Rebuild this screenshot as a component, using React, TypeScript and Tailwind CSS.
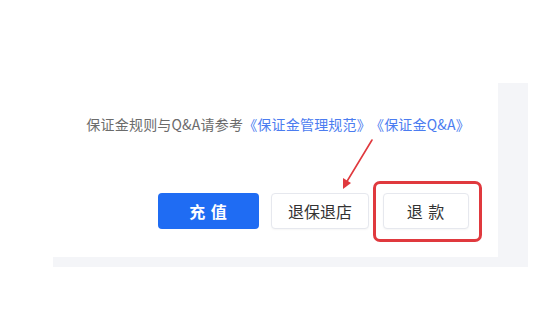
import React from 'react';

const font = { fontFamily: '"Noto Sans CJK SC", "Noto Sans", sans-serif' };

const Btn = ({ children, primary, className }: { children: React.ReactNode; primary?: boolean; className: string }) => {
  return (
    <button
      className={`h-[36px] box-border rounded-[4px] text-[16px] leading-none ${className} ${
        primary
          ? 'bg-[#1f6cf3] text-white font-bold'
          : 'bg-white text-[#333333] border border-[#e6e8ee] shadow-[0_1px_2px_rgba(0,0,0,0.04)]'
      }`}
    >
      {children}
    </button>
  );
};

export default function App() {
  return (
    <div className="w-[559px] h-[319px] bg-white pt-[83px] pl-[53px]" style={font}>
      <div className="w-[475px] h-[184px] bg-[#f4f5f8] pr-[30px] pb-[10px]">
        <div className="relative h-full bg-white flex flex-col items-end pr-[28px]">
          <p className="mt-[31px] text-[14px] leading-[20px] tracking-[0.2px] text-[#6b6b6b] whitespace-nowrap">
            保证金规则与Q&amp;A请参考
            <span className="text-[#4b7cf0]">《保证金管理规范》</span>
            <span className="text-[#4b7cf0] ml-[6px]">《保证金Q&amp;A》</span>
          </p>

          {/* Actions */}
          <div className="mt-[59px] flex items-center mr-[1px]">
            <Btn primary className="w-[101px] tracking-[1px]">
              充 值
            </Btn>
            <Btn className="w-[98px] ml-[12px]">退保退店</Btn>
            <Btn className="w-[86px] ml-[14px] tracking-[1px]">退 款</Btn>
          </div>

          {/* annotation */}
          <div className="absolute left-[320px] top-[98px] w-[109px] h-[61px] border-[3px] border-[#e0393e] rounded-[7px]" />
          <svg className="absolute left-0 top-0" width="445" height="174" viewBox="0 0 445 174">
            <line x1="319" y1="57" x2="293" y2="100" stroke="#e0393e" strokeWidth="1.6" strokeLinecap="round" />
            <polygon points="290,106 290,95 298,100" fill="#e0393e" />
          </svg>
        </div>
      </div>
    </div>
  );
}
